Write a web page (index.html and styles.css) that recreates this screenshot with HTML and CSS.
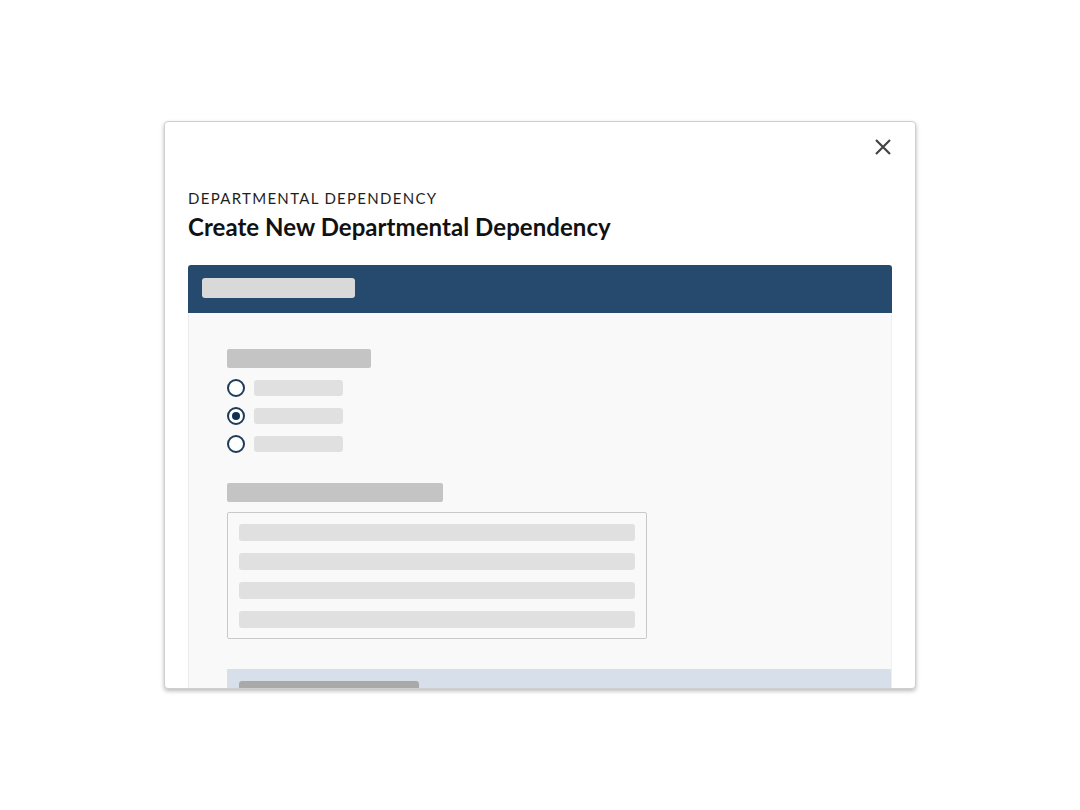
FILE: index.html
```html
<!DOCTYPE html>
<html lang="en">
<head>
<meta charset="utf-8">
<title>Create New Departmental Dependency</title>
<link rel="stylesheet" href="styles.css">
</head>
<body>
<div class="stage">
  <div class="modal">
    <div class="modal-top">
      <button class="close" aria-label="Close">
        <svg width="18" height="18" viewBox="0 0 18 18"><path d="M2 2 L16 16 M16 2 L2 16" stroke="#444" stroke-width="2.2" stroke-linecap="butt" fill="none"/></svg>
      </button>
    </div>
    <div class="eyebrow">DEPARTMENTAL DEPENDENCY</div>
    <h1 class="title">Create New Departmental Dependency</h1>
    <div class="panel">
      <div class="panel-head"><span class="ph ph-head"></span></div>
      <div class="panel-body">
        <span class="ph ph-label"></span>
        <div class="radios">
          <div class="radio-row"><span class="radio"></span><span class="ph ph-opt"></span></div>
          <div class="radio-row"><span class="radio checked"></span><span class="ph ph-opt"></span></div>
          <div class="radio-row"><span class="radio"></span><span class="ph ph-opt"></span></div>
        </div>
        <span class="ph ph-label2"></span>
        <div class="textbox">
          <span class="ph ph-line"></span>
          <span class="ph ph-line"></span>
          <span class="ph ph-line"></span>
          <span class="ph ph-line"></span>
        </div>
        <div class="section">
          <span class="ph ph-section"></span>
        </div>
      </div>
    </div>
  </div>
</div>
</body>
</html>
```
FILE: styles.css
```css
* { box-sizing: border-box; }
html, body { margin: 0; padding: 0; background: #ffffff; }
body { font-family: Lato, "Open Sans", "Liberation Sans", sans-serif; }

.stage {
  width: 1080px;
  height: 810px;
  display: flex;
  align-items: center;
  justify-content: center;
}

.modal {
  width: 752px;
  height: 568px;
  flex-shrink: 0;
  background: #fff;
  border: 1px solid #cfcfcf;
  border-radius: 4px;
  box-shadow: 0 2px 4px rgba(0,0,0,0.28);
  padding: 0 23px;
  overflow: hidden;
}

.modal-top {
  display: flex;
  justify-content: flex-end;
  padding-top: 16px;
  height: 68px;
}
.close {
  width: 18px;
  height: 18px;
  padding: 0;
  border: 0;
  background: none;
  display: flex;
}

.eyebrow {
  font-size: 15px;
  line-height: 17px;
  letter-spacing: 1.3px;
  color: #1e1e1e;
}
.title {
  margin: 5px 0 0;
  font-size: 24px;
  line-height: 30px;
  font-weight: 700;
  color: #111;
  letter-spacing: 0.05px;
}

.panel {
  margin-top: 23px;
}
.panel-head {
  height: 48px;
  background: #254a6e;
  border-radius: 3px 3px 0 0;
  padding: 13px 14px 0;
}
.panel-body {
  height: 400px;
  background: #f9f9f9;
  border-left: 1px solid #ebebeb;
  border-right: 1px solid #f0f0f0;
  padding: 36px 0 0 38px;
  display: flex;
  flex-direction: column;
  align-items: flex-start;
}

.ph { display: block; border-radius: 3px; flex-shrink: 0; }
.ph-head { width: 153px; height: 20px; background: #d9d9d9; }
.ph-label { width: 144px; height: 19px; background: #c4c4c4; border-radius: 2px; }
.ph-label2 { width: 216px; height: 19px; background: #c4c4c4; border-radius: 2px; margin-top: 30px; }
.ph-opt { width: 89px; height: 16px; background: #e0e0e0; }
.ph-line { width: 396px; height: 17px; background: #e0e0e0; }
.ph-section { width: 180px; height: 19px; background: #a9a9a9; }

.radios {
  margin-top: 11px;
  display: flex;
  flex-direction: column;
  gap: 10px;
}
.radio-row {
  display: flex;
  align-items: center;
  gap: 9px;
  height: 18px;
}
.radio {
  width: 18px;
  height: 18px;
  border-radius: 50%;
  border: 2px solid #1c3b5b;
  background: #fff;
  display: flex;
  align-items: center;
  justify-content: center;
  flex-shrink: 0;
}
.radio.checked::after {
  content: "";
  width: 8px;
  height: 8px;
  border-radius: 50%;
  background: #10304f;
}

.textbox {
  margin-top: 10px;
  width: 420px;
  height: 127px;
  flex-shrink: 0;
  border: 1px solid #c9c9c9;
  border-radius: 2px;
  padding: 11px 11px 0;
  display: flex;
  flex-direction: column;
  gap: 12px;
}

.section {
  margin-top: 30px;
  align-self: stretch;
  flex-shrink: 0;
  background: #d7e0ea;
  padding: 12px 12px 0;
  height: 60px;
}
```
